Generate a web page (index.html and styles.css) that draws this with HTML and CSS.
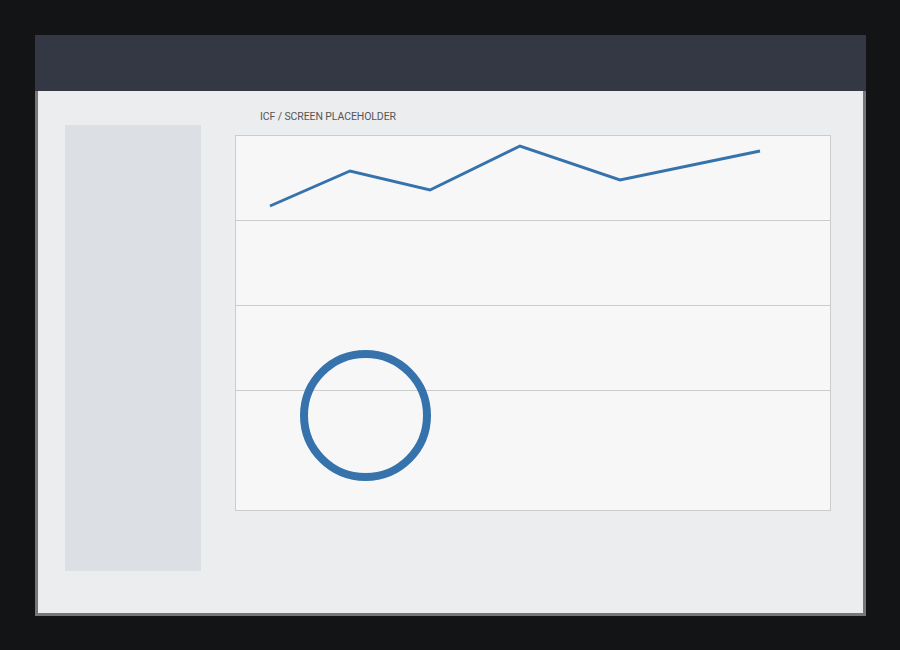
FILE: index.html
```html
<!DOCTYPE html>
<html>
<head>
<meta charset="utf-8">
<link rel="stylesheet" href="styles.css">
</head>
<body>
<div class="window">
  <div class="titlebar"></div>
  <div class="content">
    <div class="sidebar"></div>
    <div class="main">
      <div class="label">ICF / SCREEN PLACEHOLDER</div>
      <div class="chart">
        <div class="row"></div>
        <div class="row"></div>
        <div class="row"></div>
        <div class="row last"></div>
        <svg class="overlay" width="596" height="376" viewBox="0 0 596 376">
          <polyline points="35,71 115,36 195,55 285,11 385,45 525,16" fill="none" stroke="#3672ab" stroke-width="3" stroke-linejoin="miter"/>
          <circle cx="130.5" cy="280.5" r="61.5" fill="none" stroke="#3672ab" stroke-width="8"/>
        </svg>
      </div>
    </div>
  </div>
</div>
</body>
</html>
```
FILE: styles.css
```css
html, body {
  margin: 0;
  padding: 0;
  background: #131416;
  width: 900px;
  height: 650px;
  overflow: hidden;
}
.window {
  margin: 35px 0 0 35px;
  width: 825px;
  border: 3px solid #777777;
  border-top: none;
  background: #ecedef;
}
.titlebar {
  margin: 0 -3px;
  height: 56px;
  background: #333844;
}
.content {
  display: flex;
  padding: 34px 32px 42px 27px;
  height: 446px;
}
.sidebar {
  width: 136px;
  height: 446px;
  background: #dcdfe4;
  flex: none;
}
.main {
  margin-left: 34px;
  width: 596px;
}
.label {
  font-family: Roboto, "Liberation Sans", sans-serif;
  font-size: 10.5px;
  color: #555555;
  padding-left: 25px;
  height: 10px;
  line-height: 10px;
  margin-top: -13px;
  margin-bottom: 13px;
  letter-spacing: -0.1px;
}
.chart {
  position: relative;
  box-sizing: border-box;
  width: 596px;
  height: 376px;
  border: 1px solid #cccccc;
  background: #f7f7f7;
}
.row {
  height: 84px;
  border-bottom: 1px solid #cccccc;
}
.row.last {
  border-bottom: none;
}
.overlay {
  position: absolute;
  left: -1px;
  top: -1px;
}
```
